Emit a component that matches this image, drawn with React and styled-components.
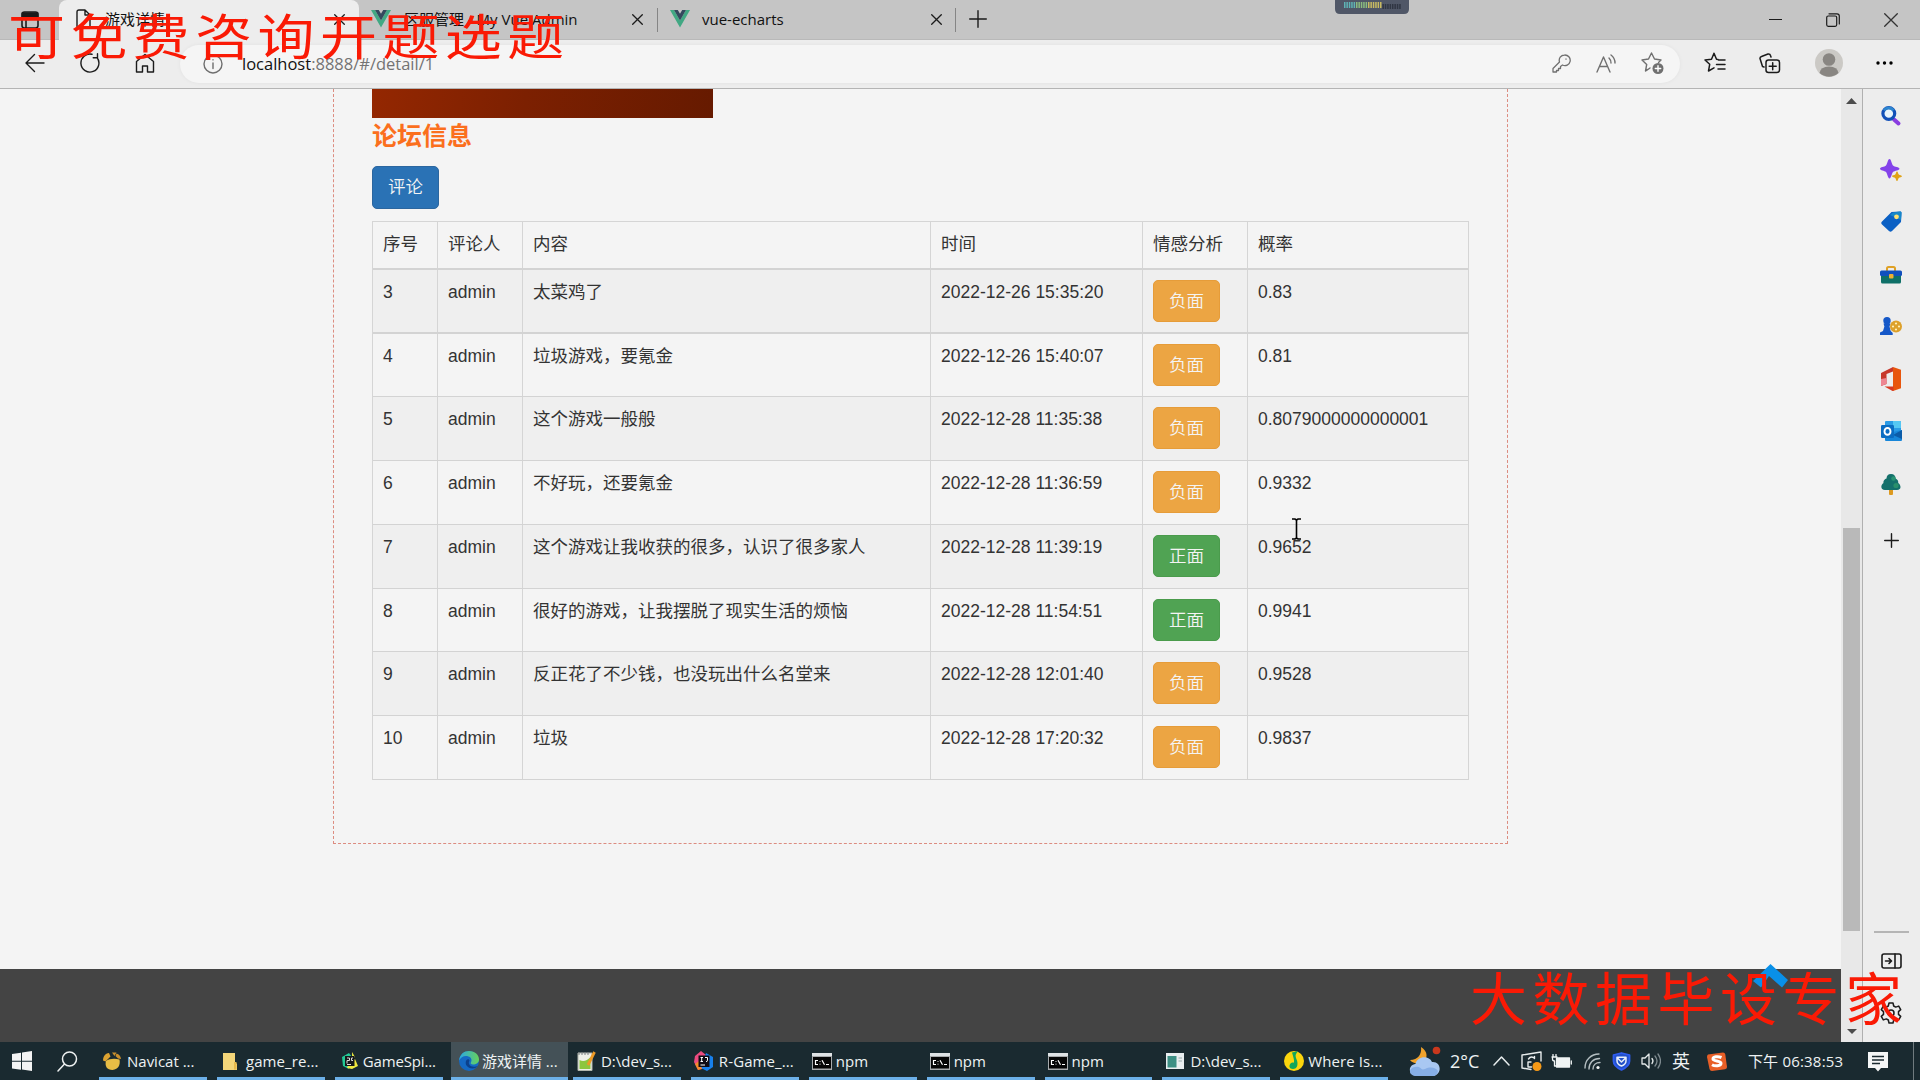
import React from "react";
import styled, { createGlobalStyle } from "styled-components";

const ui = `"Open Sans", "Noto Sans CJK SC", sans-serif`;

const Global = createGlobalStyle`
  * { box-sizing: border-box; }
  html, body { margin: 0; padding: 0; background: #f4f4f4; overflow: hidden; }
  svg { display: block; flex: none; }
`;

const Screen = styled.div`
  position: relative;
  width: 1920px;
  height: 1080px;
  display: flex;
  flex-direction: column;
  overflow: hidden;
  font-family: ${ui};
  color: #111;
  background: #ededed;
`;

/* ---------- browser chrome ---------- */
const TabBar = styled.div`
  height: 40px;
  flex: none;
  display: flex;
  background: #c5c5c5;
  border-bottom: 1px solid #b9b9b9;
`;
const TabMenu = styled.div`
  width: 59px;
  padding: 11px 0 0 21px;
`;
const Tab = styled.div`
  width: ${(p) => p.$w}px;
  height: ${(p) => (p.$active ? 40 : 39)}px;
  display: flex;
  align-items: center;
  padding: 0 ${(p) => p.$pr}px ${(p) => (p.$active ? 2 : 1)}px ${(p) => p.$pl}px;
  background: ${(p) => (p.$active ? "#ededed" : "transparent")};
  border-radius: ${(p) => (p.$active ? "8px 8px 0 0" : 0)};
`;
const TabTitle = styled.span`
  flex: 1;
  margin-left: ${(p) => p.$ml}px;
  font-size: 15px;
  line-height: 20px;
  letter-spacing: ${(p) => p.$ls || 0}px;
  white-space: nowrap;
`;
const TabRule = styled.div`
  width: 1px;
  height: 24px;
  margin-top: 8px;
  background: #858585;
`;
const NewTab = styled.div`
  padding: 10px 0 0 13px;
`;
const WindowButtons = styled.div`
  display: flex;
  align-items: center;
  gap: 44px;
  margin-left: auto;
  padding: 0 22px 0 0;
`;
const Toolbar = styled.div`
  height: 49px;
  flex: none;
  display: flex;
  align-items: center;
  padding: 0 27px 2px 25px;
  background: #ededed;
  border-bottom: 1px solid #b4b4b4;
`;
const NavButtons = styled.div`
  width: 155px;
  display: flex;
  gap: 35px;
`;
const Address = styled.div`
  width: 1500px;
  height: 38px;
  margin-top: 1px;
  display: flex;
  align-items: center;
  padding: 0 16px 0 23px;
  border-radius: 19px;
  background: #f5f5f5;
  box-shadow: 0 0 4px rgba(0, 0, 0, 0.05);
`;
const Url = styled.div`
  flex: 1;
  margin-left: 19px;
  font-size: 16.5px;
  line-height: 24px;
  color: #737373;
  b { font-weight: 400; color: #111; }
`;
const AddressTools = styled.div`
  display: flex;
  align-items: center;
  gap: 25px;
`;
const ToolbarTools = styled.div`
  margin-left: 24px;
  display: flex;
  flex: 1;
  align-items: center;
  justify-content: space-between;
`;

/* ---------- page ---------- */
const Body = styled.div`
  flex: 1;
  display: flex;
  min-height: 0;
`;
const Page = styled.main`
  width: 1841px;
  display: flex;
  flex-direction: column;
  align-items: stretch;
  background: #f4f4f4;
`;
const Panel = styled.section`
  width: 1175px;
  height: 755px;
  margin-left: 333px;
  padding: 0 38px;
  border: 1px dashed #dc8c80;
  border-top: 0;
`;
const Banner = styled.div`
  width: 341px;
  height: 29px;
  background: linear-gradient(100deg, #942701, #7c2001 45%, #661a00);
`;
const Heading = styled.h3`
  margin: 0;
  height: 48px;
  font: 700 25px/33px "Noto Sans CJK SC", sans-serif;
  color: #fb6f1d;
`;
const Button = styled.button`
  width: 67px;
  height: ${(p) => p.$h || 42}px;
  padding: 0 0 1px;
  display: flex;
  align-items: center;
  justify-content: center;
  border: 1px solid ${(p) => p.$line};
  border-radius: 5px;
  background: ${(p) => p.$fill};
  color: #f4f4f4;
  font: 350 17.5px/24px "Liberation Sans", "Noto Sans CJK SC", sans-serif;
`;
const Table = styled.div`
  width: 1097px;
  margin-top: 12px;
  border: 1px solid #d5d5d5;
  border-bottom: 0;
  font: 17.5px/25px "Liberation Sans", "Noto Sans CJK SC", sans-serif;
  color: #333;
`;
const Row = styled.div`
  display: grid;
  grid-template-columns: 65px 85px 408px 212px 105px 220px;
  height: ${(p) => p.$h}px;
  background: ${(p) => (p.$odd ? "#efefef" : "#f4f4f4")};
  border-bottom: ${(p) => (p.$thick ? 2 : 1)}px solid #d3d3d3;
`;
const Cell = styled.div`
  padding: 10px 0 0 10px;
  border-right: 1px solid #d5d5d5;
  white-space: nowrap;
  &:last-child { border-right: 0; }
`;
const Footer = styled.footer`
  height: 73px;
  margin-top: auto;
  background: #444;
`;
const ScrollTrack = styled.div`
  width: 21px;
  display: flex;
  flex-direction: column;
  align-items: center;
  padding: 9px 0 8px;
  background: #e8e8e8;
`;
const Thumb = styled.div`
  width: 17px;
  height: 403px;
  margin: 424px 0 auto;
  background: #b9b9b9;
`;
const Sidebar = styled.aside`
  flex: 1;
  display: flex;
  flex-direction: column;
  align-items: center;
  padding: 16px 1px 0 0;
  border-left: 1px solid #b0b0b0;
  background: #ededed;
`;
const SideItem = styled.div`
  height: ${(p) => p.$h}px;
  flex: none;
`;
const SideRule = styled.div`
  width: 35px;
  height: 2px;
  flex: none;
  margin: 383px 0 20px;
  background: #b5b5b5;
`;

/* ---------- taskbar ---------- */
const Taskbar = styled.div`
  height: 38px;
  flex: none;
  display: flex;
  background: #1a2a30;
  color: #eef2f3;
`;
const StartArea = styled.div`
  width: 94px;
  display: flex;
  gap: 25px;
  padding: 9px 0 0 12px;
`;
const Task = styled.div`
  width: ${(p) => (p.$active ? 117 : 117.9)}px;
  height: 38px;
  position: relative;
  display: flex;
  align-items: center;
  padding-left: ${(p) => p.$pl || 9}px;
  background: ${(p) => (p.$active ? "#445157" : "transparent")};
  ${(p) => p.$active && "margin-left: 3.3px;"}
  &::after {
    content: "";
    position: absolute;
    left: ${(p) => (p.$active ? 0 : 5)}px;
    right: ${(p) => (p.$active ? 0 : 5)}px;
    bottom: 0;
    height: 3px;
    background: #6cb0e8;
  }
`;
const TaskText = styled.span`
  margin-left: ${(p) => p.$ml || 5}px;
  font-size: 15px;
  line-height: 22px;
  letter-spacing: ${(p) => p.$ls || 0}px;
  white-space: nowrap;
`;
const Tray = styled.div`
  display: flex;
  align-items: center;
  margin-left: 15.7px;
  flex: 1;
`;
const TrayItem = styled.div`
  width: ${(p) => p.$w}px;
  flex: none;
  font-size: ${(p) => p.$fs || 16}px;
  line-height: 22px;
  letter-spacing: ${(p) => p.$ls || 0}px;
  white-space: nowrap;
`;
const DesktopEdge = styled.div`
  width: 1px;
  height: 38px;
  background: #707b7f;
`;

/* ---------- overlays ---------- */
const Caption = styled.div`
  position: absolute;
  left: ${(p) => p.$x}px;
  top: ${(p) => p.$y}px;
  font: 400 57px/60px "Noto Sans CJK SC", sans-serif;
  letter-spacing: ${(p) => p.$ls}px;
  color: #fa1a05;
  white-space: nowrap;
  transform: scaleY(${(p) => p.$sy});
  transform-origin: 0 0;
`;
const Floating = styled.div`
  position: absolute;
  left: ${(p) => p.$x}px;
  top: ${(p) => p.$y}px;
`;

/* ---------- icons ---------- */
const Line = ({ w = 20, h = 20, vb, c = "#1b1b1b", sw = 1.4, children }) => (
  <svg width={w} height={h} viewBox={vb || `0 0 ${w} ${h}`} fill="none" stroke={c} strokeWidth={sw} strokeLinecap="round" strokeLinejoin="round">
    {children}
  </svg>
);
const Close = ({ s = 11, c = "#1b1b1b" }) => (
  <Line w={s} h={s} c={c} sw={1.3}><path d={`M.7 .7L${s - 0.7} ${s - 0.7}M${s - 0.7} .7L.7 ${s - 0.7}`} /></Line>
);
const Plus = ({ s = 18 }) => (
  <Line w={s} h={s}><path d={`M${s / 2} .7V${s - 0.7}M.7 ${s / 2}H${s - 0.7}`} /></Line>
);
const Vue = () => (
  <svg width="20" height="18" viewBox="0 0 20 18">
    <path d="M0 0h4l6 10.4L16 0h4L10 17.6z" fill="#41a883" />
    <path d="M4 0h3.8L10 3.8 12.2 0H16l-6 10.4z" fill="#34495e" />
  </svg>
);

const SearchColor = () => (
  <svg width="22" height="22" viewBox="0 0 22 22">
    <path d="M14 14.500l4.500 4" stroke="#8a3de0" strokeWidth="4" strokeLinecap="round" />
    <circle cx="8.800" cy="8.500" r="5.900" fill="#e9f4fb" stroke="#1350b8" strokeWidth="3.200" />
    <path d="M4 5.300a5.900 5.900 0 0 1 9.500 0" fill="none" stroke="#2d86d0" strokeWidth="2.800" />
  </svg>
);
const Sparkle = () => (
  <svg width="22" height="22" viewBox="0 0 22 22">
    <path d="M9.500 0c1.800 0 2 5 3.500 6.500s6.500 1.500 6.500 3.300-5 1.800-6.500 3.300-1.700 6.400-3.500 6.400-2-4.900-3.500-6.400S0 11.600 0 9.800 4.500 8 6 6.500s1.700-6.500 3.500-6.500z" fill="#8443ea" />
    <path d="M17 12.500c1 0 1 2.200 1.800 3s3.200.8 3.200 1.700-2.400 1-3.200 1.800-.8 3-1.800 3-1-2.200-1.800-3-3.200-.8-3.200-1.800 2.400-.9 3.200-1.700.8-3 1.800-3z" fill="#e0a318" />
  </svg>
);
const Tag = () => (
  <svg width="21" height="21" viewBox="0 0 21 21">
    <path d="M10.500 1L19 .6c1 0 1.500.5 1.500 1.500L20 11l-9 9c-1 1-2 1-3 0l-7-6.500c-1-1-1-2 0-3z" fill="#0b60c4" />
    <path d="M12 1.500L9 4l11 5 .5-7c0-1-.5-1.400-1.500-1.400z" fill="#1687c9" />
    <circle cx="15.500" cy="5.800" r="2.400" fill="#ffe070" />
  </svg>
);
const Toolbox = () => (
  <svg width="22" height="18" viewBox="0 0 22 18">
    <path d="M7 5V2.500Q7 1 8.500 1h5Q15 1 15 2.500V5" fill="none" stroke="#dfa126" strokeWidth="2" />
    <rect x="1" y="8" width="20" height="9.500" rx="1.500" fill="#0f7068" />
    <rect x="0" y="4.500" width="22" height="5.500" rx="1.500" fill="#1150bd" />
    <rect x="9" y="8" width="4.500" height="4.500" rx="1" fill="#efb032" />
  </svg>
);
const Games = () => (
  <svg width="22" height="19" viewBox="0 0 22 19">
    <circle cx="7" cy="3.700" r="3.700" fill="#1558c8" />
    <path d="M3.500 6.500h7l-1 3 1.200 4.500 2 2V18H0v-2.500l3-1.500 1.400-4.500z" fill="#1558c8" />
    <circle cx="16" cy="9.500" r="6" fill="#dda02a" />
    <g fill="#fff1ba"><circle cx="16" cy="6.500" r="1.100" /><circle cx="13" cy="9.500" r="1.100" /><circle cx="19" cy="9.500" r="1.100" /><circle cx="16" cy="12.500" r="1.100" /></g>
  </svg>
);
const Office = () => (
  <svg width="20" height="24" viewBox="0 0 20 24">
    <path d="M12 0l8 2.700v18.600L12 24z" fill="#e8560d" />
    <path d="M0 6L12 0v4.500L5.500 7v10L0 19z" fill="#c7382c" />
    <path d="M0 12l5.500-1v6L0 19z" fill="#ee8692" />
    <path d="M3.500 19.500h9V24h-1z" fill="#d73a22" />
  </svg>
);
const Outlook = () => (
  <svg width="21" height="20" viewBox="0 0 21 20">
    <rect x="4" width="16" height="14" rx="1" fill="#2a9be6" />
    <path d="M12 0h7q1 0 1 1v6h-8z" fill="#55c7f3" />
    <path d="M4 11h8l9-2v10q0 1-1 1H5q-1 0-1-1z" fill="#1786d9" />
    <path d="M12 14l9-5v9z" fill="#0c5ca8" />
    <rect y="4" width="13" height="13" rx="1.300" fill="#0b6cc2" />
    <ellipse cx="6.500" cy="10.400" rx="3" ry="3.400" fill="none" stroke="#fff" strokeWidth="1.900" />
  </svg>
);
const Tree = () => (
  <svg width="20" height="21" viewBox="0 0 20 21">
    <rect x="8" y="14" width="4" height="7" rx="1" fill="#dd9a20" />
    <path d="M10 0c3 0 4.500 2 4.500 4.500 2 .8 3 2.500 2.700 4.500 3 2 3.500 7-1.200 7H4c-4.700 0-4.500-5-1.500-7C2 7 3.500 5.200 5.500 4.500 5.500 2 7 0 10 0z" fill="#14706b" />
    <circle cx="12.500" cy="4.500" r="2.300" fill="#2a9473" /><circle cx="15" cy="11.500" r="2.600" fill="#2a8f6b" />
  </svg>
);
const Cmd = () => (
  <svg width="20" height="17" viewBox="0 0 20 17">
    <rect width="20" height="17" fill="#a8abad" /><rect width="20" height="3" fill="#dfe3e5" />
    <rect x="1" y="4" width="18" height="11.500" fill="#050505" />
    <path d="M6 7.500H3.500v4H6M8 8v.8M8 10.700v.8M10 7.300l2.500 4.400M14 11.500h3" stroke="#fff" strokeWidth="1.200" fill="none" />
  </svg>
);
const Navicat = () => (
  <svg width="18" height="18" viewBox="0 0 18 18">
    <path d="M3 9c3-2.500 9-3 13.500-1.500 1 5-1 10-7 10.500C4 18 1.500 14 3 9z" fill="#e8bd45" />
    <path d="M0 8.500c0-4 2-7 6-7.500l1.500 3.500L2.500 9.500z" fill="#dda331" />
    <path d="M9 .5l2.500 3.500 2-3.500zM13.500 1.500q4 1 4.500 5.500l-3-.5-2.500-2.500z" fill="#c98f2c" />
  </svg>
);
const Folder = () => (
  <svg width="14" height="17" viewBox="0 0 14 17"><path d="M0 0h12v9l2 2v6H0z" fill="#f4d679" /><path d="M11 9h2.500v7.500H11z" fill="#e7b94b" /></svg>
);
const PyCharm = () => (
  <svg width="16" height="18" viewBox="0 0 16 18">
    <path d="M0 5l7-4 3 4-3 12-6-3z" fill="#22c996" /><path d="M10 0l3 5-3 2z" fill="#e7e33f" /><path d="M7 11l6-4 3 7-6 3-5-1z" fill="#f0e840" />
    <rect x="3" y="4" width="9.500" height="10" fill="#16181a" /><path d="M5 6h2.500v2.500H5v3M11 6H9.500v2.500H11M5 12.500h4" stroke="#ddd" fill="none" />
  </svg>
);
const EdgeIcon = () => (
  <svg width="20" height="20" viewBox="0 0 20 20">
    <defs><linearGradient id="eg" x1="0" x2="1"><stop offset="0" stopColor="#2aa7e4" /><stop offset="1" stopColor="#67d15b" /></linearGradient></defs>
    <circle cx="10" cy="10" r="10" fill="#1569c4" />
    <path d="M0 9.500C1 3 5 0 10 0c6 0 10 4 10 8.500 0 3.500-3 5-6 5-2 0-3-1-2-2.200C14 7 10 5 7 5 4 5 1.500 7 0 9.500z" fill="url(#eg)" />
    <path d="M7.500 9c-2.500 4 1 8.500 6 8.500 2 0 4-.8 5-2.500-2 1-7 1.500-8.500-2-.6-1.600.5-3 .5-3.500C10 8 8.500 8 7.500 9z" fill="#0c418c" />
  </svg>
);
const Notepad = () => (
  <svg width="19" height="20" viewBox="0 0 19 20">
    <path d="M1 2h14v17.500H1z" fill="#eef0e8" stroke="#b2b6ad" /><path d="M2.500 9Q8 12 13.500 6v12h-11z" fill="#8cc63e" />
    <path d="M2 1v3M5 1v3M8 1v3M11 1v3" stroke="#7b8084" /><path d="M17.500 1L11 14" stroke="#ed9a25" strokeWidth="2.800" />
  </svg>
);
const Idea = () => (
  <svg width="20" height="20" viewBox="0 0 20 20">
    <path d="M1 5l6-5 5 4-2 13-6 2-4-8z" fill="#ec4b80" /><path d="M12 2l7 4v10l-6 4-6-3z" fill="#1780ec" /><path d="M1 13l4-3 3 8-4 1z" fill="#f68b2a" />
    <rect x="4.500" y="4.500" width="11" height="11.500" fill="#100c14" /><path d="M6.500 6.500h2.500M7.700 6.500v4M6.500 10.500h2.500M11 6.500h2.500v3q0 1-1.500 1M6.500 14H11" stroke="#fff" fill="none" />
  </svg>
);
const AppWindow = () => (
  <svg width="18" height="16" viewBox="0 0 18 16"><rect width="18" height="16" fill="#e9eef0" /><rect x="1.500" y="3" width="9" height="11.500" fill="#3d8f84" /><path d="M12.500 5H16M12.500 8H16" stroke="#9aa" /></svg>
);
const Music = () => (
  <svg width="20" height="20" viewBox="0 0 20 20"><circle cx="10" cy="10" r="10" fill="#fbd50d" /><path d="M8 1.500l6-1.500-2 3c-1 2 0 4 1 6.500 1.500 5-.5 8.500-4 8.500s-4.500-3-2.500-5.500c1-1.200 2.500-1.300 3.500-.8C10.500 8.500 9 5.500 8 1.500z" fill="#12a65b" /></svg>
);
const Weather = () => (
  <svg width="32" height="31" viewBox="0 0 32 31">
    <path d="M12 1c7 4 7.500 12 1 16-5 1-10 0-12-3 8 0 12-6 11-13z" fill="#f0a22c" />
    <circle cx="27.500" cy="4.500" r="3.800" fill="#c9381d" />
    <path d="M8 30c-9 0-9.500-11-1.500-12C8 10 20 9 23 16c9-1 11 12 1 14z" fill="#a9c8f2" />
    <path d="M8 30c-9 0-9-8-2-9 7-1 5 4 10 2 6-3 11-1 13 2-1 4-3 5-5 5z" fill="#86aee6" />
  </svg>
);
const Sync = () => (
  <Line w={22} h={21} c="#e8eded" sw={1.4}>
    <path d="M1 4L20 1v9M1 4v13l9 1.500M7.500 8q2-3 5-1.500l1 1V5.500M7 11v5h3.500M7 11h3" />
    <circle cx="16" cy="15.500" r="4.500" fill="#f79a17" stroke="none" />
  </Line>
);
const Battery = () => (
  <Line w={21} h={15} c="#f0f4f4" sw={1.3}>
    <rect x="5.500" y="4" width="13" height="9" fill="#f0f4f4" /><path d="M20.300 7v3M1 3h5M2 .5V3M5 .5V3M1.500 3v2q0 2 2 2v5h2" />
  </Line>
);
const Wifi = () => (
  <Line w={17} h={17} c="#b4bec1" sw={1.4}>
    <path d="M1 15C1 7 7 1 15 1M5 16C5 10 9 5.500 15.500 5.500M9 16c0-4 3-6.500 7-6.500" /><circle cx="14" cy="14.500" r="1.600" fill="#f1f4f4" stroke="none" />
  </Line>
);
const Shield = () => (
  <Line w={19} h={19} c="#e7edfb" sw={1.8}>
    <path d="M9.500 1L17.500 3v6c0 5-5 7.500-8 8.800C6.500 16.500 1.500 14 1.500 9V3z" fill="#214fc9" stroke="#2f5cf0" /><path d="M5 5.200h9v3.500q0 3.500-4.500 5.300Q5 12.200 5 8.700zM6 6.500l3.500 3.500L13 6.500" strokeWidth="1.500" />
  </Line>
);
const Volume = () => (
  <Line w={20} h={18} c="#e5eaea" sw={1.3}>
    <path d="M1 6h3l4-4v14l-4-4H1zM11 6.500q2 2.500 0 5" /><path d="M14 4q4 5 0 10M17 2q5 7 0 14" stroke="#7e8a8f" />
  </Line>
);
const Sogou = () => (
  <svg width="20" height="19" viewBox="0 0 20 19"><path d="M1 2.500L16 .5q2 0 2.300 2L20 15q0 2-2 2.300L5 19q-2 0-2.500-2L0 5q0-2 1-2.500z" fill="#e85f27" /><path d="M14.500 5.500C11 4 6 4.500 6 7s8 1.500 8 4.300-6 3.200-9 1.400" fill="none" stroke="#fff" strokeWidth="3" /></svg>
);
const Notice = () => (
  <svg width="20" height="21" viewBox="0 0 20 21"><path d="M0 1h20v16h-7l-3 3.500L7 17H0z" fill="#f4f6f6" /><path d="M4 5.500h12M4 9h12M4 12.500h8" stroke="#1a2a30" strokeWidth="1.300" /></svg>
);

/* ---------- data ---------- */
const comments = [
  [3, "太菜鸡了", "2022-12-26 15:35:20", false, "0.83", 64],
  [4, "垃圾游戏，要氪金", "2022-12-26 15:40:07", false, "0.81", 63],
  [5, "这个游戏一般般", "2022-12-28 11:35:38", false, "0.8079000000000001", 64],
  [6, "不好玩，还要氪金", "2022-12-28 11:36:59", false, "0.9332", 64],
  [7, "这个游戏让我收获的很多，认识了很多家人", "2022-12-28 11:39:19", true, "0.9652", 64],
  [8, "很好的游戏，让我摆脱了现实生活的烦恼", "2022-12-28 11:54:51", true, "0.9941", 63],
  [9, "反正花了不少钱，也没玩出什么名堂来", "2022-12-28 12:01:40", false, "0.9528", 64],
  [10, "垃圾", "2022-12-28 17:20:32", false, "0.9837", 64],
];
const headers = ["序号", "评论人", "内容", "时间", "情感分析", "概率"];
const tasks = [
  { t: "Navicat ...", i: <Navicat />, ml: 6 },
  { t: "game_re...", i: <Folder />, ml: 9, pl: 11, ls: 0.1 },
  { t: "GameSpi...", i: <PyCharm />, ml: 5, pl: 12, ls: -0.15 },
  { t: "游戏详情 ...", i: <EdgeIcon />, ml: 3, pl: 8, active: true },
  { t: "D:\\dev_s...", i: <Notepad />, ml: 5, pl: 9 },
  { t: "R-Game_...", i: <Idea />, ml: 5, pl: 8, ls: 0.1 },
  { t: "npm", i: <Cmd />, ml: 4, pl: 8 },
  { t: "npm", i: <Cmd />, ml: 4, pl: 8 },
  { t: "npm", i: <Cmd />, ml: 4, pl: 8 },
  { t: "D:\\dev_s...", i: <AppWindow />, ml: 6, pl: 9 },
  { t: "Where Is...", i: <Music />, ml: 4, pl: 9, ls: 0.1 },
];
const sideIcons = [
  [<SearchColor />, 54], [<Sparkle />, 52], [<Tag />, 55], [<Toolbox />, 51],
  [<Games />, 50], [<Office />, 54], [<Outlook />, 53], [<Tree />, 59],
];

export default function App() {
  return (
    <Screen>
      <Global />
      <TabBar>
        <TabMenu>
          <Line w={18} h={18} sw={1.6}><rect x="1" y="1" width="16" height="16" rx="2.500" /><path d="M1.500 2h15v3.500h-15z" fill="#1b1b1b" /><path d="M5 6v10.500" /></Line>
        </TabMenu>
        <Tab $active $w={300} $pl={17} $pr={14}>
          <Line w={15} h={20}><path d="M3 1h6l5 5v11q0 2-2 2H3q-2 0-2-2V3q0-2 2-2zM9 1v5h5" /></Line>
          <TabTitle $ml={14}>游戏详情</TabTitle>
          <Close />
        </Tab>
        <Tab $w={298} $pl={12} $pr={14}>
          <Vue /><TabTitle $ml={13}>区服管理 - My Vue Admin</TabTitle><Close />
        </Tab>
        <TabRule />
        <Tab $w={297} $pl={12} $pr={13}>
          <Vue /><TabTitle $ml={12}>vue-echarts</TabTitle><Close />
        </Tab>
        <TabRule />
        <NewTab><Plus /></NewTab>
        <WindowButtons>
          <Line w={13} h={13} sw={1.2}><path d="M.5 6.500h12" /></Line>
          <Line w={14} h={14} sw={1.2}><rect x=".7" y="3" width="10" height="10.300" rx="1.500" /><path d="M3 .8h8q2.300 0 2.300 2.300V11" /></Line>
          <Close s={14} c="#333" />
        </WindowButtons>
      </TabBar>

      <Toolbar>
        <NavButtons>
          <Line><path d="M19 10H1.500M9.500 1.500L1 10l8.500 8.500" /></Line>
          <Line><path d="M17 4.500A9 9 0 1 1 12 1.300M17.500.8v4h-4.300" /></Line>
          <Line><path d="M1.500 8.500L10 1.500l8.500 7V19H12.500v-6h-5v6h-6z" /></Line>
        </NavButtons>
        <Address>
          <Line c="#6e6e6e"><circle cx="10" cy="10" r="9" /><path d="M10 9v5.500M10 5.700v.2" /></Line>
          <Url><b>localhost</b>:8888/#/detail/1</Url>
          <AddressTools>
            <Line w={19} h={19} c="#707070" sw={1.3}><path d="M12.500 1a5.300 5.300 0 1 1-2 10l-2 1.500v2H6.500v2H4.500V18H1v-3.500l6.500-6.500A5.300 5.300 0 0 1 12.500 1zM14 5v.2" /></Line>
            <Line w={20} h={20} c="#707070"><path d="M1 18L7.500 3 14 18M3.500 12.500h8M13 4q2 2 2 5M15 1q4 3 4 8" /></Line>
            <Line w={23} h={23} c="#707070"><path d="M6 17.500L4.500 19l1.200-6.500L1 8l6.500-1 3-6 3 6L20 8l-2.500 2.500M5.500 18.500L9 16" /><circle cx="17" cy="16.500" r="5.500" fill="#707070" stroke="none" /><path d="M14.300 16.500h5.400M17 13.800v5.400" stroke="#fff" /></Line>
          </AddressTools>
        </Address>
        <ToolbarTools>
          <Line w={22} h={22} sw={1.5}><path d="M14 7.500l-1.500-.3L10 1.200 7.500 7.200 1 8l4.700 4.300L4.500 19l5.500-3.200M14.500 8H21M12.500 12.500H21M14 17h7" /></Line>
          <Line w={22} h={21} sw={1.5}><path d="M5 14l-1.500-.5L1 5.500Q.8 4 2.500 3.500L9 1q2-.3 2.500 1.500L12 4" /><rect x="7" y="7" width="13.500" height="12.500" rx="2.500" /><path d="M13.700 9.700v7M10.200 13.200h7" /></Line>
          <svg width="28" height="28" viewBox="0 0 28 28"><circle cx="14" cy="14" r="14" fill="#cbc9c5" /><circle cx="14" cy="10.500" r="6.300" fill="#898682" /><path d="M4.500 24q1-6.500 9.500-6.500T23.500 24Q14 31.500 4.500 24z" fill="#898682" /></svg>
          <svg width="17" height="4" viewBox="0 0 17 4"><circle cx="2" cy="2" r="1.700" /><circle cx="8.500" cy="2" r="1.700" /><circle cx="15" cy="2" r="1.700" /></svg>
        </ToolbarTools>
      </Toolbar>

      <Body>
        <Page>
          <Panel>
            <Banner />
            <Heading>论坛信息</Heading>
            <Button $h={43} $fill="#2a72b5" $line="#2b669f">评论</Button>
            <Table>
              <Row $h={48} $thick>
                {headers.map((h) => <Cell key={h}>{h}</Cell>)}
              </Row>
              {comments.map(([id, text, time, good, rate, h], i) => (
                <Row key={id} $h={h} $odd={i % 2 === 0} $thick={i === 0}>
                  <Cell>{id}</Cell>
                  <Cell>admin</Cell>
                  <Cell>{text}</Cell>
                  <Cell>{time}</Cell>
                  <Cell>
                    <Button $fill={good ? "#50a353" : "#eca543"} $line={good ? "#4a9b4c" : "#e69c39"}>{good ? "正面" : "负面"}</Button>
                  </Cell>
                  <Cell>{rate}</Cell>
                </Row>
              ))}
            </Table>
          </Panel>
          <Footer />
        </Page>
        <ScrollTrack>
          <svg width="11" height="6" viewBox="0 0 11 6"><path d="M0 6L5.500 0 11 6z" fill="#4c4c4c" /></svg>
          <Thumb />
          <svg width="10" height="5" viewBox="0 0 10 5"><path d="M0 0h10L5 5z" fill="#4c4c4c" /></svg>
        </ScrollTrack>
        <Sidebar>
          {sideIcons.map(([icon, h], i) => <SideItem key={i} $h={h}>{icon}</SideItem>)}
          <Plus s={15} />
          <SideRule />
          <SideItem $h={49}>
            <Line w={21} h={16} sw={1.6}><rect x="1" y="1" width="19" height="14" rx="2" /><path d="M14 1v14M4.500 8H10M8 5.500L10.500 8 8 10.500" /></Line>
          </SideItem>
          <Line w={22} h={22} sw={1.5}><path d="M9 1h4l.7 3 2 1.100 3-1 2 3.500-2.200 2v2.800l2.200 2-2 3.500-3-1-2 1.100L13 21H9l-.7-3-2-1.100-3 1-2-3.500 2.200-2V9.600l-2.200-2 2-3.500 3 1 2-1.100z" /><circle cx="11" cy="11" r="3" /></Line>
        </Sidebar>
      </Body>

      <Taskbar>
        <StartArea>
          <svg width="20" height="20" viewBox="0 0 20 20" fill="#f4f4f4"><path d="M0 3l9-1.300v8H0zM10 1.500L20 0v9.700H10zM0 10.700h9v8L0 17.400zM10 10.700h10V20l-10-1.400z" /></svg>
          <Line w={21} h={21} c="#eef1f1" sw={1.5}><circle cx="12.500" cy="8" r="7" /><path d="M7.500 13L1 20" /></Line>
        </StartArea>
        {tasks.map((k, i) => (
          <Task key={i} $active={k.active} $pl={k.pl}>
            {k.i}<TaskText $ml={k.ml} $ls={k.ls}>{k.t}</TaskText>
          </Task>
        ))}
        <Tray>
          <TrayItem $w={41}><Weather /></TrayItem>
          <TrayItem $w={43} $fs={18}>2°C</TrayItem>
          <TrayItem $w={28}><Line w={17} h={10} c="#e8eded" sw={1.5}><path d="M1 9l7.500-8L16 9" /></Line></TrayItem>
          <TrayItem $w={30}><Sync /></TrayItem>
          <TrayItem $w={33}><Battery /></TrayItem>
          <TrayItem $w={28}><Wifi /></TrayItem>
          <TrayItem $w={29}><Shield /></TrayItem>
          <TrayItem $w={31}><Volume /></TrayItem>
          <TrayItem $w={35} $fs={18}>英</TrayItem>
          <TrayItem $w={41}><Sogou /></TrayItem>
          <TrayItem $w={120} $fs={15} $ls={0.2}>下午 06:38:53</TrayItem>
          <TrayItem $w={45}><Notice /></TrayItem>
          <DesktopEdge />
        </Tray>
      </Taskbar>

      <Floating $x={1335} $y={0}>
        <svg width="74" height="14" viewBox="0 0 74 14">
          <path d="M0 0h74v9q0 5-5 5H5q-5 0-5-5z" fill="#505767" />
          {Array.from({ length: 24 }, (_, i) => (
            <rect key={i} x={9 + i * 2.4} y={i < 16 ? 2 : 4} width="1.500" height={i < 16 ? 6 : 5} fill={i < 5 ? "#5fb3b5" : i < 10 ? "#8bbd7f" : i < 16 ? "#c9bb62" : "#303643"} />
          ))}
        </svg>
      </Floating>
      <Floating $x={1753} $y={964}>
        <svg width="36" height="24" viewBox="0 0 36 24"><path d="M17.500 0L35 16l-6 7.500L16 12l-8 11.500L0 17z" fill="#0990e8" /></svg>
      </Floating>
      <Floating $x={1292} $y={518}>
        <svg width="9" height="22" viewBox="0 0 9 22"><path d="M0 1h3l1.500 1L6 1h3M4.500 2v18M0 21h3l1.500-1L6 21h3" fill="none" stroke="#000" strokeWidth="1.600" /></svg>
      </Floating>
      <Caption $x={8} $y={8} $ls={5.4} $sy={0.86}>可免费咨询开题选题</Caption>
      <Caption $x={1470} $y={965} $ls={5.5} $sy={1}>大数据毕设专家</Caption>
    </Screen>
  );
}
